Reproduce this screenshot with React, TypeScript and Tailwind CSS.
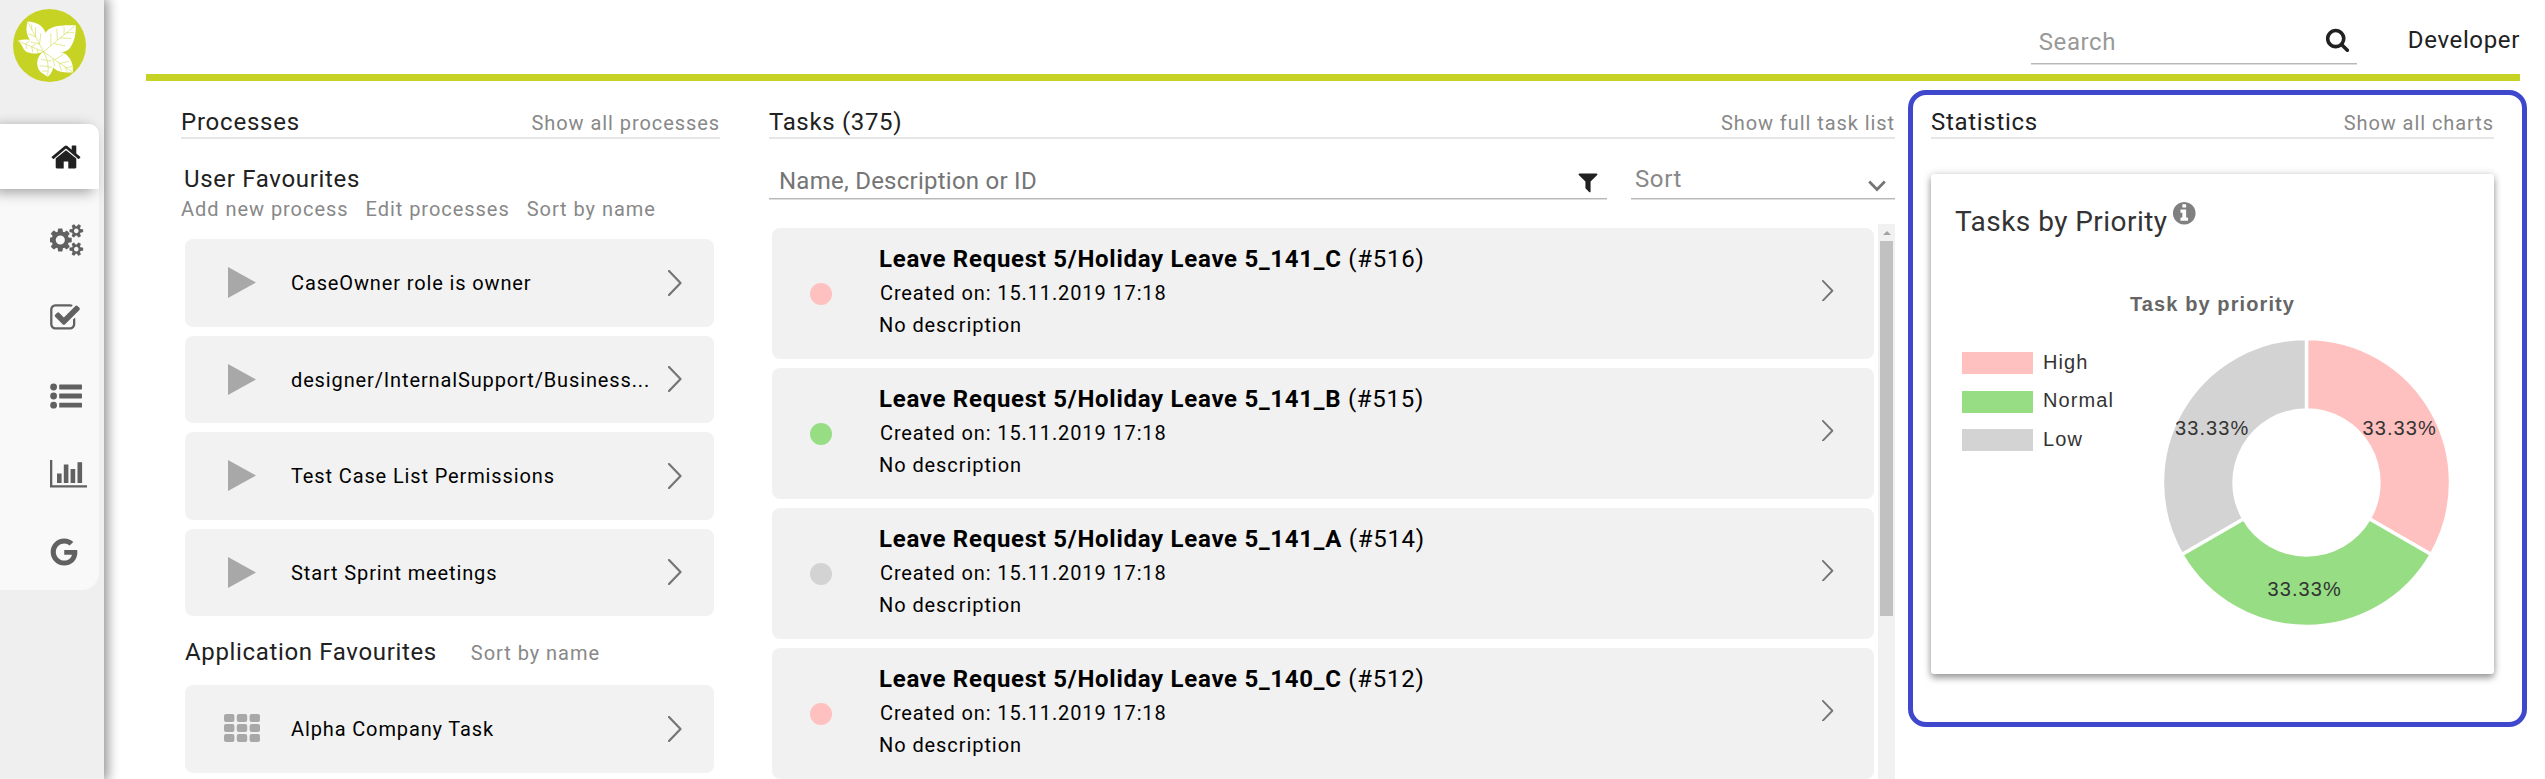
import type { ReactNode } from "react";
import { FaGoogle } from "react-icons/fa";

const HOME =
  "M1472 992v480q0 26-19 45t-45 19h-384v-384h-256v384h-384q-26 0-45-19t-19-45v-480q0-1 .5-3t.5-3l575-474 575 474q1 2 1 6zm223-69l-62 74q-8 9-21 11h-3q-13 0-21-7l-692-577-692 577q-12 8-24 7-13-2-21-11l-62-74q-8-10-7-23.5t11-21.5l719-599q32-26 76-26t76 26l244 204v-195q0-14 9-23t23-9h192q14 0 23 9t9 23v408l219 182q10 8 11 21.5t-7 23.5z";
const COGS =
  "M832 896q0-106-75-181t-181-75-181 75-75 181 75 181 181 75 181-75 75-181zm768 512q0-52-38-90t-90-38-90 38-38 90q0 53 37.5 90.5t90.5 37.5 90.5-37.5 37.5-90.5zm0-1024q0-52-38-90t-90-38-90 38-38 90q0 53 37.5 90.5t90.5 37.5 90.5-37.5 37.5-90.5zm-384 421v185q0 10-7 19.5t-16 10.5l-155 24q-11 35-32 76 34 48 90 115 7 11 7 20 0 12-7 19-23 30-82.5 89.5t-78.5 59.5q-11 0-21-7l-115-90q-37 19-77 31-11 108-23 155-7 24-30 24h-186q-11 0-20-7.5t-10-17.5l-23-153q-34-10-75-31l-118 89q-7 7-20 7-11 0-21-8-144-133-144-160 0-9 7-19 10-14 41-53t47-61q-23-44-35-82l-152-24q-10-1-17-9.5t-7-19.5v-185q0-10 7-19.5t16-10.5l155-24q11-35 32-76-34-48-90-115-7-11-7-20 0-12 7-20 22-30 82-89t79-59q11 0 21 7l115 90q34-18 77-32 11-108 23-154 7-24 30-24h186q11 0 20 7.5t10 17.5l23 153q34 10 75 31l118-89q8-7 20-7 11 0 21 8 144 133 144 160 0 8-7 19-12 16-42 54t-45 60q23 48 34 82l152 23q10 2 17 10.5t7 19.5zm640 533v140q0 16-149 31-12 27-30 52 51 113 51 138 0 4-4 7-122 71-124 71-8 0-46-47t-52-68q-20 2-30 2t-30-2q-14 21-52 68t-46 47q-2 0-124-71-4-3-4-7 0-25 51-138-18-25-30-52-149-15-149-31v-140q0-16 149-31 13-29 30-52-51-113-51-138 0-4 4-7 4-2 35-20t59-34 30-16q8 0 46 46.5t52 67.5q20-2 30-2t30 2q51-71 92-112l6-2q4 0 124 70 4 3 4 7 0 25-51 138 17 23 30 52 149 15 149 31zm0-1024v140q0 16-149 31-12 27-30 52 51 113 51 138 0 4-4 7-122 71-124 71-8 0-46-47t-52-68q-20 2-30 2t-30-2q-14 21-52 68t-46 47q-2 0-124-71-4-3-4-7 0-25 51-138-18-25-30-52-149-15-149-31v-140q0-16 149-31 13-29 30-52-51-113-51-138 0-4 4-7 4-2 35-20t59-34 30-16q8 0 46 46.5t52 67.5q20-2 30-2t30 2q51-71 92-112l6-2q4 0 124 70 4 3 4 7 0 25-51 138 17 23 30 52 149 15 149 31z";
const CHECK =
  "M1472 930v318q0 119-84.5 203.5t-203.5 84.5h-832q-119 0-203.5-84.5t-84.5-203.5v-832q0-119 84.5-203.5t203.5-84.5h832q63 0 117 25 15 7 18 23 3 17-9 29l-49 49q-10 10-23 10-3 0-9-2-23-6-45-6h-832q-66 0-113 47t-47 113v832q0 66 47 113t113 47h832q66 0 113-47t47-113v-254q0-13 9-22l64-64q10-10 23-10 6 0 12 3 20 8 20 29zm231-489l-814 814q-24 24-57 24t-57-24l-430-430q-24-24-24-57t24-57l110-110q24-24 57-24t57 24l263 263 647-647q24-24 57-24t57 24l110 110q24 24 24 57t-24 57z";
const FILTER =
  "M1595 295q17 41-14 70l-493 493v742q0 42-39 59-13 5-25 5-27 0-45-19l-256-256q-19-19-19-45v-486l-493-493q-31-29-14-70 17-39 59-39h1280q42 0 59 39z";
const SEARCH =
  "M1216 832q0-185-131.5-316.5t-316.5-131.5-316.5 131.5-131.5 316.5 131.5 316.5 316.5 131.5 316.5-131.5 131.5-316.5zm512 832q0 52-38 90t-90 38q-54 0-90-38l-343-342q-179 124-399 124-143 0-273.5-55.5t-225-150-150-225-55.5-273.5 55.5-273.5 150-225 225-150 273.5-55.5 273.5 55.5 225 150 150 225 55.5 273.5q0 220-124 399l343 343q37 37 37 90z";
const INFO =
  "M1152 1376v-160q0-14-9-23t-23-9h-96v-512q0-14-9-23t-23-9h-320q-14 0-23 9t-9 23v160q0 14 9 23t23 9h96v320h-96q-14 0-23 9t-9 23v160q0 14 9 23t23 9h448q14 0 23-9t9-23zm-128-896v-160q0-14-9-23t-23-9h-192q-14 0-23 9t-9 23v160q0 14 9 23t23 9h192q14 0 23-9t9-23zm640 416q0 209-103 385.5t-279.5 279.5-385.5 103-385.5-103-279.5-279.5-103-385.5 103-385.5 279.5-279.5 385.5-103 385.5 103 279.5 279.5 103 385.5z";

function Logo() {
  return (
    <svg viewBox="38 27 220 220" className="ml-[13px] mt-[9px] block size-[73px] shrink-0">
      <circle cx="148" cy="137" r="110" fill="#c7d324" />
      <g fill="#fff">
        <path d="M131 156C112 140 66 122 82 65C104 67 118 72 128 84C140 98 144 122 131 156Z" />
        <path d="M130 156C128 128 126 102 146 88C166 75 196 75 227 76C228 104 223 126 211 142C198 162 168 160 130 156Z" />
        <path d="M130 156C112 164 92 162 78 156C66 148 66 132 52 123C68 119 84 117 98 122C112 128 122 140 130 156Z" />
        <path d="M130 156C112 168 108 186 113 203C118 218 130 222 143 231C154 222 160 208 160 194C158 176 146 166 130 156Z" />
        <path d="M130 156C152 150 184 152 200 166C216 182 220 198 218 218C196 220 178 218 164 208C150 196 148 176 130 156Z" />
      </g>
      <g fill="none" stroke="#c7d324" strokeWidth="1.5">
        <path d="M130 156L84 69M130 156L224 78M130 156L55 124M130 156Q150 190 142 228M130 156L216 216" />
        <path d="M95 90L94 74M106 111L106 82M106 111L84 101M118 133L122 100M118 133L92 126" />
        <path d="M152 138L152 100M172 121L170 86M192 104L192 82M160 131L196 138M180 114L214 116M198 99L222 98" />
        <path d="M76 133L88 122M94 141L106 132M76 133L80 148M94 141L98 158M110 148L114 161" />
        <path d="M141 182L122 178M144 200L118 198M143 214L126 214M142 184L154 182M144 202L156 202" />
        <path d="M158 176L164 200M176 188L184 213M194 201L202 216M164 180L190 164M180 191L208 184M198 204L216 200" />
      </g>
    </svg>
  );
}

function Glyph({ d, width = 1792, className }: { d: string; width?: number; className: string }) {
  return (
    <svg viewBox={`0 0 ${width} 1792`} className={className} fill="currentColor">
      <path d={d} />
    </svg>
  );
}

function NavItem({ children }: { children: ReactNode }) {
  return <div className="flex h-[78px] items-center pl-[49px] text-[#616161]">{children}</div>;
}

function Sidebar() {
  return (
    <aside className="flex w-[104px] shrink-0 flex-col bg-[#efefef] shadow-[2px_0_11px_2px_rgba(0,0,0,0.42)]">
      <Logo />
      <nav className="mt-[42px] h-[466px] w-[99px] rounded-br-[17px] rounded-tr-[10px] bg-[#f9f9f9]">
        <div className="flex h-[65px] items-center rounded-tr-[10px] bg-white pl-[49px] text-[#212121] shadow-[-6px_3px_14px_rgba(0,0,0,0.38)]">
          <Glyph d={HOME} className="ml-px size-8" />
        </div>
        <div className="pt-[12px]">
          <NavItem>
            <Glyph d={COGS} width={1920} className="ml-px h-8 w-[34.3px]" />
          </NavItem>
          <NavItem>
            <Glyph d={CHECK} className="size-8" />
          </NavItem>
          <NavItem>
            <svg viewBox="0 0 32 32" className="ml-px size-8" fill="currentColor">
              <circle cx="3.6" cy="7" r="3.4" />
              <circle cx="3.6" cy="16" r="3.4" />
              <circle cx="3.6" cy="25.2" r="3.4" />
              <rect x="9.2" y="4.6" width="22.8" height="4.8" rx="0.6" />
              <rect x="9.2" y="13.6" width="22.8" height="4.8" rx="0.6" />
              <rect x="9.2" y="22.8" width="22.8" height="4.8" rx="0.6" />
            </svg>
          </NavItem>
          <NavItem>
            <svg viewBox="0 0 37 28" className="ml-px h-7 w-[37px]" fill="currentColor">
              <path d="M0 0h2.3v25.3H37V27.6H0z" />
              <rect x="7" y="13.5" width="4.6" height="9.5" />
              <rect x="13.8" y="4.5" width="4.6" height="18.5" />
              <rect x="20.6" y="9" width="4.6" height="14" />
              <rect x="27.5" y="2.2" width="4.6" height="20.8" />
            </svg>
          </NavItem>
          <NavItem>
            <FaGoogle className="ml-px size-[28px]" />
          </NavItem>
        </div>
      </nav>
    </aside>
  );
}

function SectionHeader({ title, link, titleClass }: { title: string; link: string; titleClass: string }) {
  return (
    <div className="flex h-[31px] items-baseline justify-between border-b-2 border-[#e6e6e6]">
      <h2 className={`text-2xl leading-7 text-[#212121] ${titleClass}`}>{title}</h2>
      <a className="text-xl leading-6 tracking-[0.93px] text-[#888]">{link}</a>
    </div>
  );
}

function Chevron({ className }: { className: string }) {
  return (
    <svg viewBox="0 0 14 26" className={className} fill="none" stroke="#757575">
      <path d="M1 1L12.5 13L1 25" strokeWidth="2.2" strokeLinecap="round" strokeLinejoin="round" />
    </svg>
  );
}

function ProcessCard({ name, app = false }: { name: string; app?: boolean }) {
  return (
    <div className="ml-1 flex h-[87.5px] w-[529px] items-center rounded-lg bg-[#f2f2f2]">
      {app ? (
        <svg viewBox="0 0 36 28" className="-mt-0.5 ml-[39px] mr-[31px] h-7 w-9" fill="#a8a8a8">
          {[0, 12.8, 25.6].map((x) =>
            [0, 10, 20].map((y) => <rect key={`${x}-${y}`} x={x} y={y} width="10.4" height="8" rx="2" />),
          )}
        </svg>
      ) : (
        <svg viewBox="0 0 28 31" className="ml-[43px] mr-[35px] h-[31px] w-7" fill="#a8a8a8">
          <path d="M0 0L28 15.5L0 31Z" />
        </svg>
      )}
      <span className="mt-px flex-1 text-xl leading-6 tracking-[0.87px] text-black">{name}</span>
      <Chevron className="mr-[32px] h-[26px] w-3.5" />
    </div>
  );
}

function Processes() {
  return (
    <section className="mt-[27px] w-[539px] shrink-0">
      <SectionHeader title="Processes" link="Show all processes" titleClass="tracking-[0.78px]" />
      <h3 className="ml-[3px] mt-[26px] text-2xl leading-7 tracking-[0.68px] text-[#212121]">User Favourites</h3>
      <div className="mt-1 flex gap-[17px] text-xl leading-6 tracking-[0.96px] text-[#888]">
        <a>Add new process</a>
        <a>Edit processes</a>
        <a>Sort by name</a>
      </div>
      <div className="mt-[18px] flex flex-col gap-[9px]">
        <ProcessCard name="CaseOwner role is owner" />
        <ProcessCard name="designer/InternalSupport/Business..." />
        <ProcessCard name="Test Case List Permissions" />
        <ProcessCard name="Start Sprint meetings" />
      </div>
      <div className="ml-1 mt-[22px] flex h-7 items-baseline gap-[34px]">
        <h3 className="text-2xl leading-7 tracking-[0.65px] text-[#212121]">Application Favourites</h3>
        <a className="text-xl leading-6 tracking-[0.96px] text-[#888]">Sort by name</a>
      </div>
      <div className="mt-[19px]">
        <ProcessCard name="Alpha Company Task" app />
      </div>
    </section>
  );
}

const TASKS = [
  { name: "Leave Request 5/Holiday Leave 5_141_C", id: "(#516)", dot: "bg-[#ffc0c0]" },
  { name: "Leave Request 5/Holiday Leave 5_141_B", id: "(#515)", dot: "bg-[#96dd84]" },
  { name: "Leave Request 5/Holiday Leave 5_141_A", id: "(#514)", dot: "bg-[#d3d3d3]" },
  { name: "Leave Request 5/Holiday Leave 5_140_C", id: "(#512)", dot: "bg-[#ffc0c0]" },
];

function Tasks() {
  return (
    <section className="ml-[49px] mt-[27px] flex w-[1126px] shrink-0 flex-col">
      <SectionHeader title="Tasks (375)" link="Show full task list" titleClass="tracking-[0.66px]" />
      <div className="mt-[21px] flex h-10 gap-6">
        <div className="flex h-[39px] w-[838px] items-start justify-between border-b border-[#b8b8b8] pl-[10px] pr-[7px] pt-[7px] shadow-[0_1px_0_#dedede]">
          <span className="text-2xl leading-7 tracking-[0.25px] text-[#757575]">Name, Description or ID</span>
          <Glyph d={FILTER} className="mt-[3px] size-6 text-[#212121]" />
        </div>
        <div className="flex h-[39px] w-[264px] items-start justify-between border-b border-[#b8b8b8] pl-1 pr-[9px] pt-[5px] shadow-[0_1px_0_#dedede]">
          <span className="text-2xl leading-7 tracking-[0.6px] text-[#888]">Sort</span>
          <svg viewBox="0 0 18 12" className="mt-[15px] h-3 w-[18px]" fill="none" stroke="#757575">
            <path d="M1.2 1.6L9 9.4L16.8 1.6" strokeWidth="2.8" />
          </svg>
        </div>
      </div>
      <div className="mt-6 flex h-[555px] justify-between overflow-hidden">
        <div className="ml-[3px] flex w-[1102px] flex-col gap-[9px] pt-1">
          {TASKS.map((t) => (
            <article key={t.id} className="flex h-[131px] shrink-0 items-center rounded-lg bg-[#f1f1f1]">
              <span className={`ml-[38px] size-[22px] rounded-full ${t.dot}`} />
              <div className="ml-[47px] flex-1 self-start pt-[17px] text-black">
                <h4 className="text-2xl leading-7 tracking-[0.72px]">
                  <b className="font-bold">{t.name}</b> {t.id}
                </h4>
                <p className="ml-px mt-2 text-xl leading-6 tracking-[0.88px]">Created on: 15.11.2019 17:18</p>
                <p className="mt-2 text-xl leading-6 tracking-[0.92px]">No description</p>
              </div>
              <Chevron className="-mt-1.5 mr-10 h-[21.5px] w-[11.6px]" />
            </article>
          ))}
        </div>
        <div className="flex w-[17px] flex-col items-center bg-[#f1f1f1]">
          <svg viewBox="0 0 8 4" className="mt-[7px] h-1 w-2" fill="#a3a3a3">
            <path d="M4 0L8 4H0Z" />
          </svg>
          <div className="mt-[6px] h-[375px] w-[13px] bg-[#c1c1c1]" />
        </div>
      </div>
    </section>
  );
}

const LEGEND = [
  { label: "High", color: "#ffc0c0", y: 115, baseline: 132 },
  { label: "Normal", color: "#96dd84", y: 154, baseline: 170 },
  { label: "Low", color: "#d3d3d3", y: 192, baseline: 209 },
];

const CX = 375.5;
const CY = 245.5;

function slice(start: number) {
  const outer = 144;
  const inner = 72.5;
  const a = (start * Math.PI) / 180;
  const b = ((start + 120) * Math.PI) / 180;
  const p = (r: number, t: number) => `${(CX + r * Math.sin(t)).toFixed(2)} ${(CY - r * Math.cos(t)).toFixed(2)}`;
  return `M${p(outer, a)}A${outer} ${outer} 0 0 1 ${p(outer, b)}L${p(inner, b)}A${inner} ${inner} 0 0 0 ${p(inner, a)}Z`;
}

function PriorityChart() {
  return (
    <svg
      viewBox="0 0 563 436"
      className="block h-[436px] w-[563px] font-['Liberation_Sans',Arial,sans-serif] text-xl tracking-[1.1px]"
    >
      <text x="199" y="73.5" fill="#666" className="font-bold">
        Task by priority
      </text>
      {LEGEND.map((l) => (
        <g key={l.label}>
          <rect x="31" y={l.y} width="71" height="22" fill={l.color} />
          <text x="112" y={l.baseline} fill="#333">
            {l.label}
          </text>
        </g>
      ))}
      <g stroke="#fff" strokeWidth="3.4">
        <path d={slice(0)} fill="#ffc0c0" />
        <path d={slice(120)} fill="#96dd84" />
        <path d={slice(240)} fill="#d3d3d3" />
      </g>
      <g fill="#333">
        <text x="431.5" y="198">33.33%</text>
        <text x="336.5" y="359">33.33%</text>
        <text x="244" y="198">33.33%</text>
      </g>
    </svg>
  );
}

function Statistics() {
  return (
    <section className="ml-[13px] mt-[9px] h-[637px] w-[619px] shrink-0 rounded-[18px] border-[5px] border-[#3f48cc] pl-[18px] pr-[28px] pt-[13px]">
      <SectionHeader title="Statistics" link="Show all charts" titleClass="tracking-[0.7px]" />
      <div className="mt-[35px] h-[500px] w-[563px] rounded-[3px] bg-white pt-[31px] shadow-[0_4px_7px_rgba(0,0,0,0.36),0_0_9px_rgba(0,0,0,0.14)]">
        <div className="flex h-8 items-start pl-6">
          <h3 className="mt-px text-[28px] leading-8 tracking-[0.45px] text-[#333]">Tasks by Priority</h3>
          <Glyph d={INFO} className="-mt-[5px] ml-1 size-[26.5px] text-[#808080]" />
        </div>
        <PriorityChart />
      </div>
    </section>
  );
}

export default function App() {
  return (
    <div className="flex h-[779px] w-[2545px] overflow-hidden bg-white font-['Roboto',sans-serif] whitespace-nowrap">
      <Sidebar />
      <main className="ml-[42px] w-[2399px]">
        <header className="flex h-[81px] w-[2374px] justify-end border-b-[7px] border-[#c7d324]">
          <div className="flex h-16 w-[326px] items-start justify-between border-b border-[#b8b8b8] pl-2 pr-[7px] pt-[28px] shadow-[0_1px_0_#dedede]">
            <span className="text-2xl leading-7 tracking-[0.6px] text-[#999]">Search</span>
            <Glyph d={SEARCH} className="-mt-px size-[25px] text-[#212121]" />
          </div>
          <span className="ml-[51px] mt-[26px] text-2xl leading-7 tracking-[0.65px] text-[#212121]">Developer</span>
        </header>
        <div className="flex pl-[35px]">
          <Processes />
          <Tasks />
          <Statistics />
        </div>
      </main>
    </div>
  );
}
